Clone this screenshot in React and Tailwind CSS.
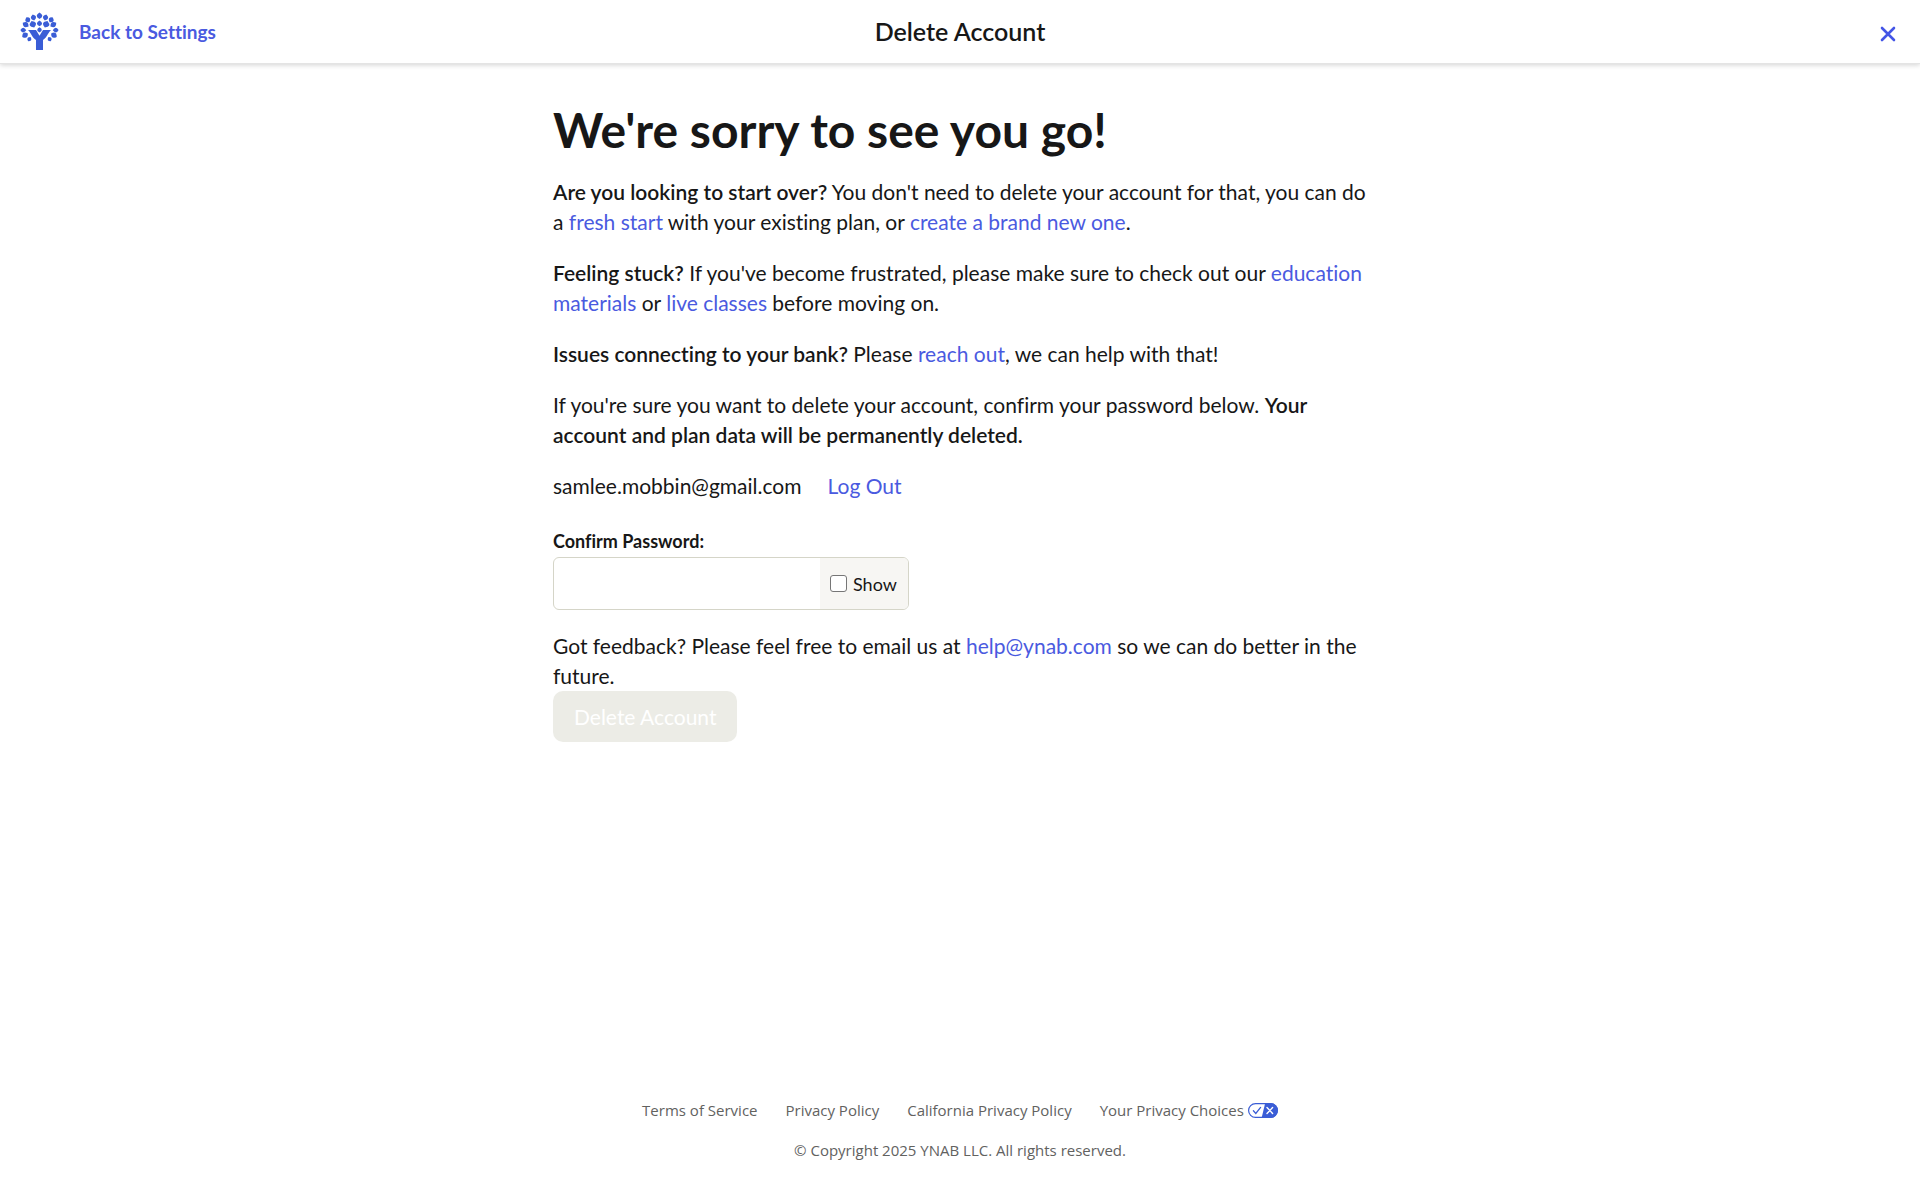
import React, { useState } from 'react';

// one side of the crown: [x, y, half width, half height, rotation]
const sideLeaves = [
  [13.8, 5.6, 2.2, 3.1, -14],
  [8, 8, 2.1, 3, -34],
  [13.2, 12.6, 2.7, 3.6, -22],
  [5.8, 12.9, 2.2, 3.5, -58],
  [3.4, 18.6, 1.9, 3, -86],
  [5.2, 23.8, 2.2, 3.4, -122],
  [9.6, 27.8, 1.7, 2.5, -150],
];

const centerLeaves = [
  [20, 3.8, 2.3, 3.4, 0],
  [20, 11.6, 2.1, 3, 0],
  [20, 18.4, 1.9, 2.7, 0],
];

const Leaf = ({ x, y, w, h, r }) => (
  <path
    d={`M0 ${-h}Q${w * 2.5} 0 0 ${h}Q${-w * 2.5} 0 0 ${-h}z`}
    transform={`translate(${x} ${y}) rotate(${r})`}
  />
);

const TreeLogo = () => (
  <svg viewBox="0 0 40 40" className="size-[39px] shrink-0" fill="#3a5dd6" aria-hidden="true">
    {centerLeaves.map(([x, y, w, h, r]) => <Leaf key={y} x={x} y={y} w={w} h={h} r={r} />)}
    {sideLeaves.map(([x, y, w, h, r]) => (
      <g key={y}>
        <Leaf x={x} y={y} w={w} h={h} r={r} />
        <Leaf x={40 - x} y={y} w={w} h={h} r={-r} />
      </g>
    ))}
    <path d="M8 18.400h8.400l3.600 6 3.600-6H32C29 20.400 28.200 25.400 23.600 28.800V39h-7.200V28.800C11.800 25.400 11 20.400 8 18.400z" />
  </svg>
);

const CloseIcon = () => (
  <svg viewBox="0 0 16 16" className="size-4" fill="none" stroke="currentColor" strokeWidth="2.6" strokeLinecap="round" aria-hidden="true">
    <path d="M2 2l12 12M14 2L2 14" />
  </svg>
);

const PrivacyIcon = () => (
  <svg viewBox="0 0 30 15" className="w-[30px] h-[15px]" aria-hidden="true">
    <rect x=".6" y=".6" width="28.8" height="13.8" rx="6.9" fill="#fff" stroke="#3a5dd6" strokeWidth="1.2" />
    <path d="M17.2 0H22.5a7.5 7.5 0 0 1 0 15H13.6z" fill="#3a5dd6" />
    <path d="M5.4 7.8l2.4 2.6 4.8-6" fill="none" stroke="#3a5dd6" strokeWidth="1.3" strokeLinecap="round" />
    <path d="M19 4.6l5.6 5.8M24.6 4.6L19 10.4" fill="none" stroke="#fff" strokeWidth="1.4" strokeLinecap="round" />
  </svg>
);

const TextLink = ({ href = '#', children }) => (
  <a href={href} className="text-[#4a5ae0] hover:underline">{children}</a>
);

const footerLinks = ['Terms of Service', 'Privacy Policy', 'California Privacy Policy'];

const App = () => {
  const [password, setPassword] = useState('');
  const [show, setShow] = useState(false);

  return (
    <div className="min-h-screen flex flex-col bg-white text-[#171717] font-[Lato,'Liberation_Sans',sans-serif] [font-variant-ligatures:none]">
      <header className="h-16 px-5 grid grid-cols-3 items-center border-b border-[#e4e4e4] shadow-[0_1px_5px_rgba(0,0,0,0.18)]">
        <div className="flex items-center gap-5">
          <TreeLogo />
          <a href="#" className="text-[19px] leading-6 font-bold text-[#4a5ae0]">Back to Settings</a>
        </div>
        <h1 className="pb-0.5 text-[25px] leading-8 font-semibold text-center">Delete Account</h1>
        <button type="button" aria-label="Close" className="justify-self-end p-1 pt-2 text-[#4355e6]">
          <CloseIcon />
        </button>
      </header>

      <main className="w-full max-w-[814px] mx-auto pt-[35px] text-[21px] leading-[30px]">
        <h2 className="text-[48px] leading-[62px] font-bold mb-4">We're sorry to see you go!</h2>
        <p className="mb-[21px]">
          <strong className="font-semibold">Are you looking to start over?</strong> You don't need to delete your account for that, you can do
          a <TextLink>fresh start</TextLink> with your existing plan, or <TextLink>create a brand new one</TextLink>.
        </p>
        <p className="mb-[21px]">
          <strong className="font-semibold">Feeling stuck?</strong> If you've become frustrated, please make sure to check out our{' '}
          <TextLink>education materials</TextLink> or <TextLink>live classes</TextLink> before moving on.
        </p>
        <p className="mb-[21px]">
          <strong className="font-semibold">Issues connecting to your bank?</strong> Please <TextLink>reach out</TextLink>, we can help with that!
        </p>
        <p className="mb-[21px]">
          If you're sure you want to delete your account, confirm your password below.{' '}
          <strong className="font-semibold">Your account and plan data will be permanently deleted.</strong>
        </p>
        <div className="flex gap-[26px] mb-7">
          <span>samlee.mobbin@gmail.com</span>
          <TextLink>Log Out</TextLink>
        </div>

        <label htmlFor="password" className="block text-[18px] leading-6 font-bold mb-1">Confirm Password:</label>
        <div className="flex w-[356px] max-w-full h-[53px] mb-[21px] border border-[#d5d5c8] rounded-md overflow-hidden">
          <input
            id="password"
            type={show ? 'text' : 'password'}
            value={password}
            onChange={e => setPassword(e.target.value)}
            className="flex-1 min-w-0 px-3 outline-none"
          />
          <label className="w-[88px] flex items-center gap-1.5 pl-2.5 bg-[#f7f6f3] text-[18px]">
            <input
              type="checkbox"
              checked={show}
              onChange={e => setShow(e.target.checked)}
              className="appearance-none size-[17px] bg-white border border-[#767676] rounded-[3px] checked:bg-[#4a5ae0]"
            />
            Show
          </label>
        </div>

        <p>
          Got feedback? Please feel free to email us at <TextLink href="mailto:help@ynab.com">help@ynab.com</TextLink> so we can do better in the future.
        </p>
        <button type="button" disabled={!password} className="h-[51px] px-[21px] rounded-[10px] bg-[#ecece6] text-white enabled:bg-[#4a5ae0]">
          Delete Account
        </button>
      </main>

      <footer className="mt-auto pb-[38px] flex flex-col items-center gap-4 text-[15px] leading-6 text-[#62625f] font-['Open_Sans','Liberation_Sans',sans-serif]">
        <nav className="flex flex-wrap justify-center gap-x-7">
          {footerLinks.map(label => <a key={label} href="#">{label}</a>)}
          <a href="#" className="flex items-center gap-1">Your Privacy Choices <PrivacyIcon /></a>
        </nav>
        <p>© Copyright 2025 YNAB LLC. All rights reserved.</p>
      </footer>
    </div>
  );
};

export default App;
